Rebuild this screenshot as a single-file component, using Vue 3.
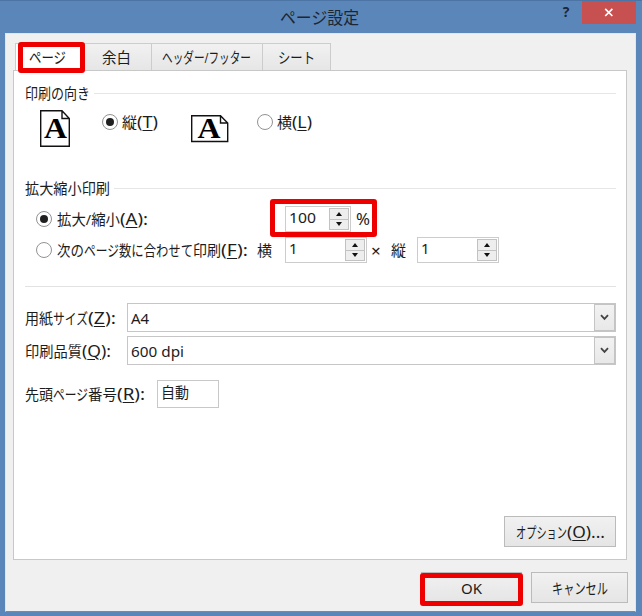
<script setup>
import { ref } from 'vue'

const tabs = [
  { label: 'ページ', cls: 'tab-page', w: 37 },
  { label: '余白', cls: 'tab-margin', w: 29 },
  { label: 'ヘッダー/フッター', cls: 'tab-header', w: 89 },
  { label: 'シート', cls: 'tab-sheet', w: 37 }
]
const activeTab = ref(0)
const orientation = ref('portrait')
const scaling = ref('zoom')

// Condenses or widens a run of text to the given width in pixels.
const vFit = {
  mounted(el, { value }) {
    const natural = el.getBoundingClientRect().width
    el.style.transform = `scaleX(${value / natural})`
    el.style.marginRight = `${value - natural}px`
  }
}
</script>

<template>
  <div class="window">
    <header class="titlebar">
      <h1><span v-fit="79">ページ設定</span></h1>
      <div class="help">?</div>
      <div class="close">
        <svg width="10" height="9" viewBox="0 0 10 9"><path d="M1.2.8 8.4 8M8.4.8 1.2 8" /></svg>
      </div>
    </header>

    <main class="body">
      <nav class="tabs">
        <div v-for="(t, i) in tabs" :key="t.label" class="tab" :class="[t.cls, { active: i === activeTab }]" @click="activeTab = i">
          <span v-fit="t.w">{{ t.label }}</span>
          <i v-if="i === 0" class="mark"></i>
        </div>
      </nav>

      <section class="panel">
        <div class="legend first"><span v-fit="65">印刷の向き</span><hr /></div>
        <div class="orient">
          <svg class="portrait" width="31" height="38" viewBox="0 0 31 38">
            <path d="M.7.7H22L29.3 8.5V36.3H.7ZM22 .7V8.5H29.3" />
            <text x="4" y="28" textLength="23" lengthAdjust="spacingAndGlyphs">A</text>
          </svg>
          <label class="opt opt-p" @click="orientation = 'portrait'">
            <i class="radio" :class="{ on: orientation === 'portrait' }"></i><span v-fit="15">縦</span><span class="key" v-fit="21">(<u>T</u>)</span>
          </label>
          <svg class="landscape" width="38" height="28" viewBox="0 0 38 28">
            <path d="M.7.7H29.5L36.7 8V26.5H.7ZM29.5.7V8H36.7" />
            <text x="6.5" y="23" textLength="23" lengthAdjust="spacingAndGlyphs">A</text>
          </svg>
          <label class="opt opt-l" @click="orientation = 'landscape'">
            <i class="radio" :class="{ on: orientation === 'landscape' }"></i><span v-fit="15">横</span><span class="key" v-fit="20">(<u>L</u>)</span>
          </label>
        </div>

        <div class="legend second"><span v-fit="85">拡大縮小印刷</span><hr /></div>
        <div class="row scale-row">
          <label class="opt zoom" @click="scaling = 'zoom'">
            <i class="radio" :class="{ on: scaling === 'zoom' }"></i><span v-fit="63">拡大/縮小</span><span class="key" v-fit="28">(<u>A</u>):</span>
          </label>
          <div class="percent">
            <div class="spin narrow"><span v-fit="27">100</span><div class="arrows"><b class="up"></b><b class="down"></b></div></div>
            <span class="pct" v-fit="14">%</span>
            <i class="mark"></i>
          </div>
        </div>
        <div class="row fit-row">
          <label class="opt pages" @click="scaling = 'fit'">
            <i class="radio" :class="{ on: scaling === 'fit' }"></i><span v-fit="27">次の</span><span v-fit="35">ページ</span><span v-fit="74">数に合わせて</span><span v-fit="28">印刷</span><span class="key" v-fit="27">(<u>F</u>):</span>
          </label>
          <span class="wide-label">横</span>
          <div class="spin"><span>1</span><div class="arrows"><b class="up"></b><b class="down"></b></div></div>
          <span class="times">×</span>
          <span class="tall-label">縦</span>
          <div class="spin"><span>1</span><div class="arrows"><b class="up"></b><b class="down"></b></div></div>
        </div>

        <hr class="sep" />

        <div class="row field">
          <div class="name"><span v-fit="28">用紙</span><span v-fit="35">サイズ</span><span class="key" v-fit="28">(<u>Z</u>):</span></div>
          <div class="combo"><span>A4</span><div class="drop"><svg width="9" height="7" viewBox="0 0 9 7"><path d="M1 1.2 4.5 4.9 8 1.2" /></svg></div></div>
        </div>
        <div class="row field">
          <div class="name"><span v-fit="57">印刷品質</span><span class="key" v-fit="29">(<u>Q</u>):</span></div>
          <div class="combo"><span v-fit="53">600 dpi</span><div class="drop"><svg width="9" height="7" viewBox="0 0 9 7"><path d="M1 1.2 4.5 4.9 8 1.2" /></svg></div></div>
        </div>
        <div class="row number">
          <div class="name"><span v-fit="28">先頭</span><span v-fit="35">ページ</span><span v-fit="29">番号</span><span class="key" v-fit="28">(<u>R</u>):</span></div>
          <div class="auto"><span v-fit="28">自動</span></div>
        </div>

        <button class="btn options"><span v-fit="51">オプション</span><span class="key" v-fit="38">(<u>O</u>)...</span></button>
      </section>

      <footer>
        <button class="btn ok"><span>OK</span><i class="mark"></i></button>
        <button class="btn cancel"><span v-fit="56">キャンセル</span></button>
      </footer>
    </main>
  </div>
</template>

<style>
body { overflow: hidden; background: #5b86ba; }
</style>

<style scoped>
* { box-sizing: border-box; }
.window {
  width: 642px; height: 616px; display: flex; flex-direction: column;
  background: #5b86ba; border-top: 1px solid #4c74a4; color: #1c1c1c;
  font: 15px/20px "Noto Sans", "Noto Sans CJK JP", sans-serif;
}
span { display: inline-block; flex: none; white-space: nowrap; transform-origin: 0 50%; }
u { text-decoration-thickness: 1px; text-underline-offset: 2px; }
.key { font-size: 16px; }
.titlebar { height: 32px; display: flex; align-items: flex-start; }
h1 { flex: 1; margin: 0; padding: 7px 0 0 280px; font-size: 16.5px; font-weight: 400; line-height: 20px; color: #1d2733; }
.help { width: 14px; margin-right: 9px; text-align: center; font: bold 14px/22px "Open Sans", sans-serif; color: #1b2737; }
.close { width: 54px; height: 23px; margin-right: 6px; background: #c75050; display: flex; align-items: center; justify-content: center; }
.close path { stroke: #fff; stroke-width: 1.7; fill: none; }
.body { width: 631px; height: 579px; margin-left: 5px; padding: 9px 7px 0; background: #f0f0f0; border: 1px solid #dde7f2; border-bottom-color: #6f8caf; }

.tabs { display: flex; height: 27px; padding-left: 2px; }
.tab { position: relative; border: 1px solid #ccc; border-left: 0; border-bottom: 0; height: 27px; background: linear-gradient(#f1f1f1, #e6e6e6); display: flex; justify-content: center; align-items: center; }
.tab.active { background: #fff; border-left: 1px solid #ccc; z-index: 1; padding-right: 5px; }
.tab-page { width: 70px; }
.tab-margin { width: 67px; padding-right: 4px; }
.tab-header { width: 111px; padding-right: 2px; }
.tab-sheet { width: 68px; }
.mark { position: absolute; border: 5px solid #ef0000; border-radius: 3px; z-index: 2; pointer-events: none; }
.tab .mark { left: 2px; top: -2px; width: 67px; height: 31px; }

.panel { width: 614px; height: 490px; padding: 0 10px 0 11px; border: 1px solid #c8c8c8; background: #fff; display: flex; flex-direction: column; }
.legend { display: flex; align-items: center; height: 20px; }
.legend hr { flex: 1; margin: 0 0 0 4px; border: 0; height: 1px; background: #e6e6e6; }
.first { margin-top: 12px; }
.second { margin-top: 28px; }
.orient { display: flex; align-items: flex-start; height: 40px; margin-top: 7px; }
.orient path { fill: #fff; stroke: #111; stroke-width: 1.4; }
.orient text { font: bold 29px "Liberation Serif", serif; fill: #000; }
.portrait { margin-left: 15px; }
.landscape { margin-top: 5px; }
.opt { display: flex; align-items: center; height: 20px; }
.opt-p { width: 89px; margin: 2px 0 0 31px; }
.opt-l { margin: 2px 0 0 28px; }
.radio { flex: none; width: 16px; height: 16px; margin-right: 4px; border: 1px solid #929292; border-radius: 50%; display: flex; align-items: center; justify-content: center; background: #fff; }
.radio.on::after { content: ""; width: 8px; height: 8px; border-radius: 50%; background: #202020; }
.row { display: flex; align-items: center; }
.row .radio { margin-right: 5px; }
.scale-row { height: 26px; margin-top: 8px; padding-left: 11px; }
.zoom { width: 249px; }
.percent { position: relative; display: flex; align-items: center; }
.percent .mark { left: -15px; top: -7px; width: 107px; height: 38px; }
.pct { margin-left: 5px; font-size: 16px; }
.fit-row { height: 26px; margin-top: 5px; padding-left: 11px; }
.pages { width: 221px; }
.wide-label { width: 28px; }
.times { width: 25px; padding-left: 5px; margin-top: 1px; font-size: 17px; }
.tall-label { width: 26px; }
.spin { width: 82px; height: 26px; border: 1px solid #ccc; display: flex; justify-content: space-between; background: #fff; }
.spin > span { margin-left: 3px; line-height: 21px; }
.spin + .times { margin-left: -1px; }
.narrow { width: 66px; }
.arrows { width: 20px; margin: 1px 1px 1px auto; display: flex; flex-direction: column; }
.arrows b { flex: 1; border: 1px solid #c2c2c2; background: #eee; display: flex; align-items: center; justify-content: center; }
.arrows b + b { border-top: 0; }
.arrows b::after { content: ""; border: 3px solid transparent; }
.arrows .up::after { border-top: 0; border-bottom: 4px solid #111; }
.arrows .down::after { border-bottom: 0; border-top: 4px solid #111; }
.sep { width: 100%; height: 1px; margin: 23px 0 16px; border: 0; background: #e2e2e2; flex: none; }
.field { height: 29px; margin-bottom: 4px; }
.name { display: flex; }
.field .name { width: 102px; }
.combo { flex: 1; height: 29px; border: 1px solid #c6c6c6; display: flex; align-items: center; padding-left: 3px; }
.drop { width: 21px; height: 27px; margin-left: auto; border: 1px solid #c4c4c4; background: linear-gradient(#f2f2f2, #e8e8e8); display: flex; align-items: center; justify-content: center; }
.drop path { fill: none; stroke: #444; stroke-width: 1.8; }
.number { height: 28px; margin-top: 11px; }
.number .name { width: 132px; }
.auto { width: 62px; height: 28px; border: 1px solid #c8c8c8; padding-left: 3px; }
.auto span { line-height: 22px; }
.btn { position: relative; padding: 0; border: 1px solid #bbb; background: linear-gradient(#f1f1f1, #e5e5e5); font: inherit; color: inherit; display: flex; align-items: center; justify-content: center; }
.options { width: 112px; height: 31px; margin: 108px 0 0; align-self: flex-end; }
footer { display: flex; justify-content: flex-end; gap: 9px; padding: 12px 0 0; }
.ok { width: 101px; height: 31px; }
.ok .mark { left: -2px; top: 0; width: 103px; height: 33px; }
.cancel { width: 97px; height: 31px; }
</style>
